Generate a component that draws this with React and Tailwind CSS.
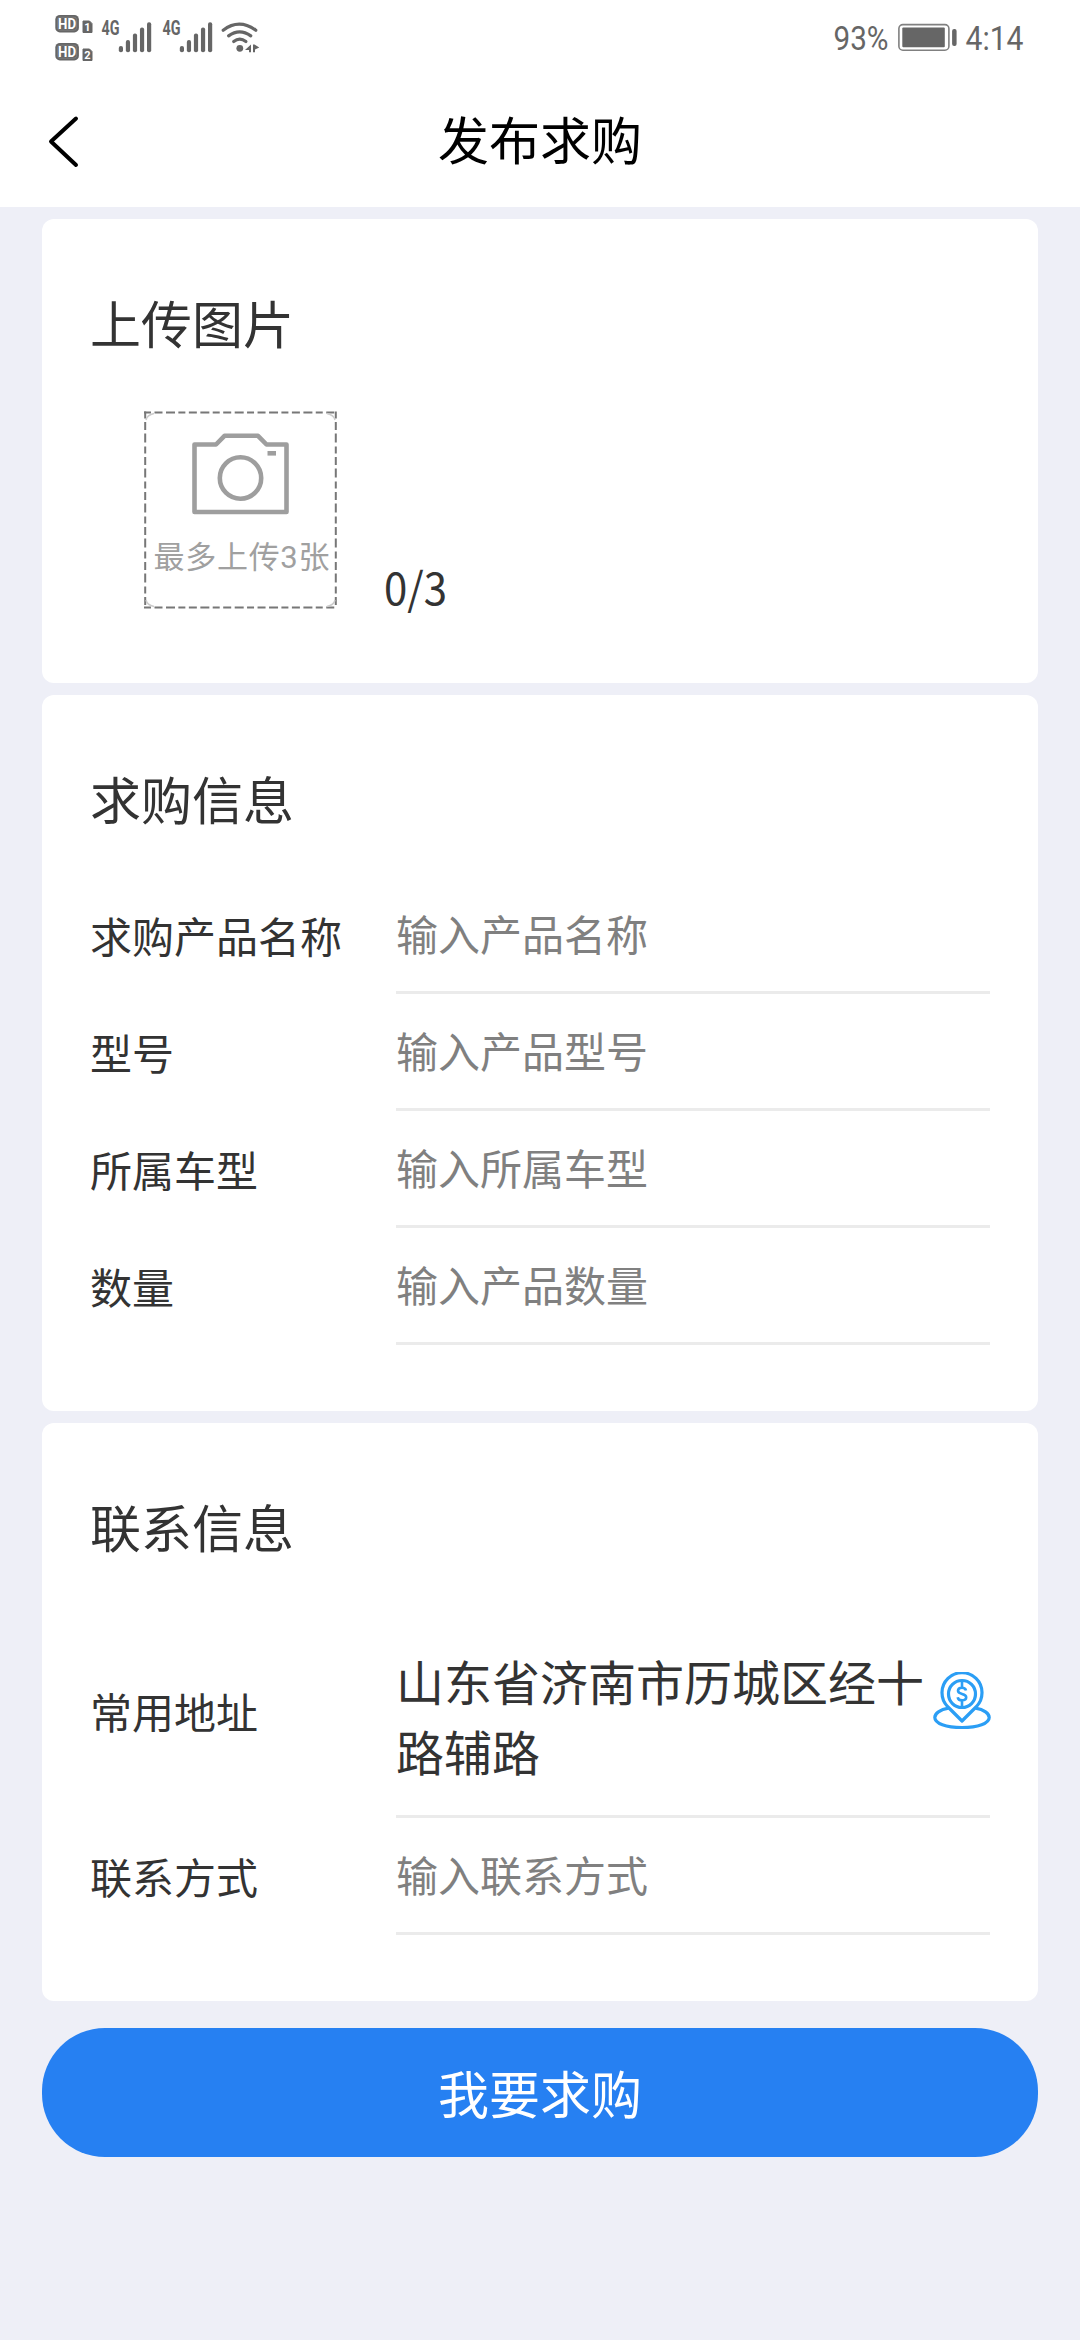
const STATUS = "#666666";

function HdBadge({ n }) {
  return (
    <svg width="38" height="20" viewBox="0 0 38 20" className="block">
      <rect x="0.3" y="1" width="23.6" height="17.4" rx="4.5" fill={STATUS} />
      <rect x="2.6" y="3.2" width="19" height="13" rx="2.5" fill="none" stroke="#8a8a8a" strokeWidth="0.6" />
      <text x="12.1" y="14.7" textAnchor="middle" textLength="18" lengthAdjust="spacingAndGlyphs" fontFamily="Roboto" fontSize="15" fontWeight="700" fill="#fff">HD</text>
      <path d="M28 7h6.500l2.500 2.500v9h-9z" fill={STATUS} stroke={STATUS} strokeLinejoin="round" />
      <text x="32.4" y="16.800" textAnchor="middle" fontFamily="Roboto" fontSize="11" fontWeight="700" fill="#fff">{n}</text>
    </svg>
  );
}

function Signal() {
  const tops = [46, 40, 33.5, 27.5, 22.2];
  return (
    <svg width="61" height="75" viewBox="0 0 61 75" className="block">
      <text x="0.5" y="35" textLength="18" lengthAdjust="spacingAndGlyphs" fontFamily="Roboto" fontSize="19.500" fontWeight="700" fill={STATUS}>4G</text>
      {tops.map((t, i) => (
        <rect key={i} x={17.800 + i * 7.050} y={t} width="4.2" height={52.3 - t} rx="2" fill={STATUS} />
      ))}
    </svg>
  );
}

function Wifi() {
  return (
    <svg width="40" height="75" viewBox="0 0 40 75" className="block" fill="none" stroke={STATUS} strokeWidth="3.2" strokeLinecap="round">
      <path d="M3.200 30.200q15.800-12 32.600 0" />
      <path d="M8.600 35.900q11-8.200 22.200 0" />
      <path d="M13.700 41.500q6-4.800 12.200 0" />
      <circle cx="19.800" cy="48.300" r="3.400" fill={STATUS} stroke="none" />
      <path d="M31 44.400v7.800h-2v-2.200h-4zM33 44.400h1.500l4.800 3.200-4.300 2v2.600H33z" fill={STATUS} stroke="none" />
    </svg>
  );
}

function StatusBar() {
  return (
    <div className="flex h-[75px] justify-between pl-[55px] pr-[50px]">
      <div className="flex">
        <div className="flex w-[46px] flex-col gap-2 pt-[14px]">
          <HdBadge n="1" />
          <HdBadge n="2" />
        </div>
        <Signal />
        <Signal />
        <div className="-ml-[3px]">
          <Wifi />
        </div>
      </div>
      <svg width="198" height="75" viewBox="0 0 198 75" className="block" fontFamily="Roboto" fontSize="34" fill={STATUS}>
        <text x="1.500" y="50" textLength="55" lengthAdjust="spacingAndGlyphs">93%</text>
        <rect x="66.900" y="24.600" width="50" height="25.600" rx="4" fill="none" stroke="#808080" strokeWidth="1.600" />
        <rect x="70.300" y="27.500" width="42.500" height="19.800" rx="1" />
        <rect x="120.100" y="29" width="4.500" height="17" rx="2" />
        <text x="133.500" y="50" textLength="58" lengthAdjust="spacingAndGlyphs">4:14</text>
      </svg>
    </div>
  );
}

function Header() {
  return (
    <div className="grid h-[132px] grid-cols-[200px_1fr_200px]">
      <svg width="100" height="132" viewBox="0 0 100 132" fill="none" stroke="#000" strokeWidth="4" strokeLinecap="round" strokeLinejoin="round">
        <path d="M76 43.500L51 66.500L76 90" />
      </svg>
      <h1 className="pt-[25px] text-center text-[51px] leading-[76px] text-black">发布求购</h1>
    </div>
  );
}

function Card({ title, children, className = "" }) {
  return (
    <section className={`rounded-xl bg-white pl-12 pr-12 pt-[66px] pb-[66px] ${className}`}>
      <h2 className="h-[116px] text-[51px] leading-[75px]">{title}</h2>
      {children}
    </section>
  );
}

function Row({ label, placeholder }) {
  return (
    <div className="flex h-[117px]">
      <div className="w-[306px] shrink-0 text-[42px] leading-[115px]">{label}</div>
      <input
        className="min-w-0 flex-1 border-b-[3px] border-[#ebebeb] pb-[4px] text-[42px] placeholder:text-[#808080] placeholder:opacity-100 outline-none"
        placeholder={placeholder}
      />
    </div>
  );
}

function UploadTile() {
  return (
    <svg width="193" height="198" viewBox="0 0 193 198" className="block" fill="none">
      <path d="M0 1.500H193M0 196.500H193" stroke="#777" strokeWidth="2" strokeDasharray="7 3.500 8 3.500 9 3.350" />
      <path d="M1.200 0.500V197.500M191.800 0.500V197.500" stroke="#777" strokeWidth="2" strokeDasharray="7 3.500 8 3.500 9 4" />
      <path d="M2 9Q3 4 10 2.500M183 2.500Q190 4 191 9M2 189Q3 194 10 195.500M183 195.500Q190 194 191 189" stroke="#ccc" strokeWidth="1.500" />
      <g stroke="#9e9e9e" strokeWidth="4.600" strokeLinejoin="round">
        <path d="M50.500 33.500H72L80.500 24.800H114L122.500 33.500H142.500V101H50.500z" />
        <circle cx="96.500" cy="67" r="20.700" />
        <path d="M123.500 42.300h8.500" />
      </g>
      <text x="9.500" y="157" textLength="176" fontSize="31" fill="#a0a0a0" className="font-[Roboto,'Noto_Sans_CJK_SC',sans-serif]">最多上传3张</text>
    </svg>
  );
}

function AddressIcon() {
  return (
    <svg width="58" height="58" viewBox="0 0 58 58" className="block" fill="none" stroke="#2b9ef5" strokeWidth="3.200" strokeLinejoin="round">
      <path d="M29 49L14.500 34.500A20 20 0 1 1 43.500 34.500z" />
      <circle cx="29" cy="22" r="13.500" />
      <path d="M15.500 36.200C7 37.500 1.800 41.500 1.800 45.500C1.800 51.500 13 55.500 29 55.500S56.200 51.500 56.200 45.500C56.200 41.500 51 37.500 42.500 36.200" />
      <path d="M33 18.500C32.500 16.500 31 15.800 29 15.800C26.500 15.800 25 17 25 18.800C25 23 33.200 20.800 33.200 25.200C33.200 27.200 31.500 28.300 29 28.300C26.700 28.300 25 27.300 24.700 25.200M29 10v6M29 28v6" strokeWidth="2.600" />
    </svg>
  );
}

export default function App() {
  return (
    <main className="h-[2340px] w-[1080px] overflow-hidden bg-[#eeeff7] font-['Noto_Sans_CJK_SC',sans-serif] text-[#333]">
      <div className="h-[207px] bg-white">
        <StatusBar />
        <Header />
      </div>
      <div className="flex flex-col gap-3 px-[42px] pt-3">
        <Card title="上传图片" className="h-[464px]">
          <div className="flex pl-[54px] pt-[10px]">
            <UploadTile />
            <div className="pl-[47px] pt-[142px]">
              <div className="scale-y-106 text-[42px] leading-[66px]">0/3</div>
            </div>
          </div>
        </Card>
        <Card title="求购信息">
          <Row label="求购产品名称" placeholder="输入产品名称" />
          <Row label="型号" placeholder="输入产品型号" />
          <Row label="所属车型" placeholder="输入所属车型" />
          <Row label="数量" placeholder="输入产品数量" />
        </Card>
        <Card title="联系信息">
          <div className="flex h-[213px]">
            <div className="w-[306px] shrink-0 text-[42px] leading-[211px]">常用地址</div>
            <div className="flex flex-1 justify-between border-b-[3px] border-[#ebebeb]">
              <p className="w-[530px] pt-[40px] text-[48px] leading-[70px]">山东省济南市历城区经十路辅路</p>
              <div className="-mr-px pt-[67px]">
                <AddressIcon />
              </div>
            </div>
          </div>
          <Row label="联系方式" placeholder="输入联系方式" />
        </Card>
        <button className="mt-[15px] h-[129px] rounded-[63px] bg-[#2680f2] pb-[1px] text-[51px] text-white">我要求购</button>
      </div>
    </main>
  );
}
